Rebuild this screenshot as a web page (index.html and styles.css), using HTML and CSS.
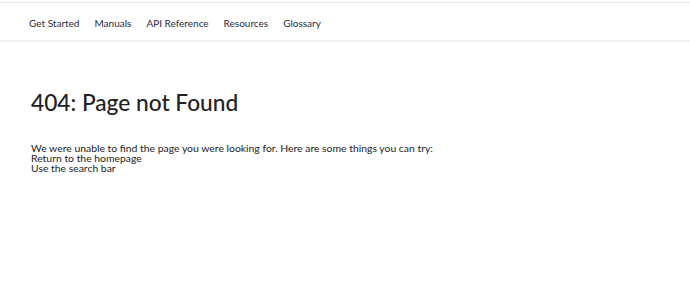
FILE: index.html
```html
<!DOCTYPE html>
<html lang="en">
<head>
<meta charset="utf-8">
<title>404: Page not Found</title>
<link rel="stylesheet" href="styles.css">
</head>
<body>
<header class="topbar">
  <nav class="nav">
    <a class="nav-link" href="#">Get Started</a>
    <a class="nav-link" href="#">Manuals</a>
    <a class="nav-link" href="#">API Reference</a>
    <a class="nav-link" href="#">Resources</a>
    <a class="nav-link" href="#">Glossary</a>
  </nav>
</header>
<main class="content">
  <h1 class="title">404: Page not Found</h1>
  <div class="message">
    <p class="line">We were unable to find the page you were looking for. Here are some things you can try:</p>
    <p class="line">Return to the homepage</p>
    <p class="line">Use the search bar</p>
  </div>
</main>
</body>
</html>
```
FILE: styles.css
```css
html, body {
  margin: 0;
  padding: 0;
  background: #ffffff;
}
body {
  font-family: Lato, "Noto Sans", sans-serif;
  color: #222222;
}
.topbar {
  margin-top: 2px;
  border-top: 1px solid #e4e4e4;
  border-bottom: 2px solid #f3f3f3;
  height: 37px;
  display: flex;
  align-items: center;
}
.nav {
  display: flex;
  gap: 15px;
  padding-left: 29px;
  padding-top: 2px;
}
.nav-link {
  font-size: 10px;
  color: #2a2a3a;
  text-decoration: none;
}
.content {
  padding-left: 31px;
}
.title {
  margin: 47px 0 0;
  font-size: 22.7px;
  font-weight: 500;
  line-height: 28px;
  color: #222222;
}
.message {
  margin-top: 26px;
}
.line {
  margin: 0;
  font-size: 10.4px;
  line-height: 10px;
  color: #222222;
}
```
